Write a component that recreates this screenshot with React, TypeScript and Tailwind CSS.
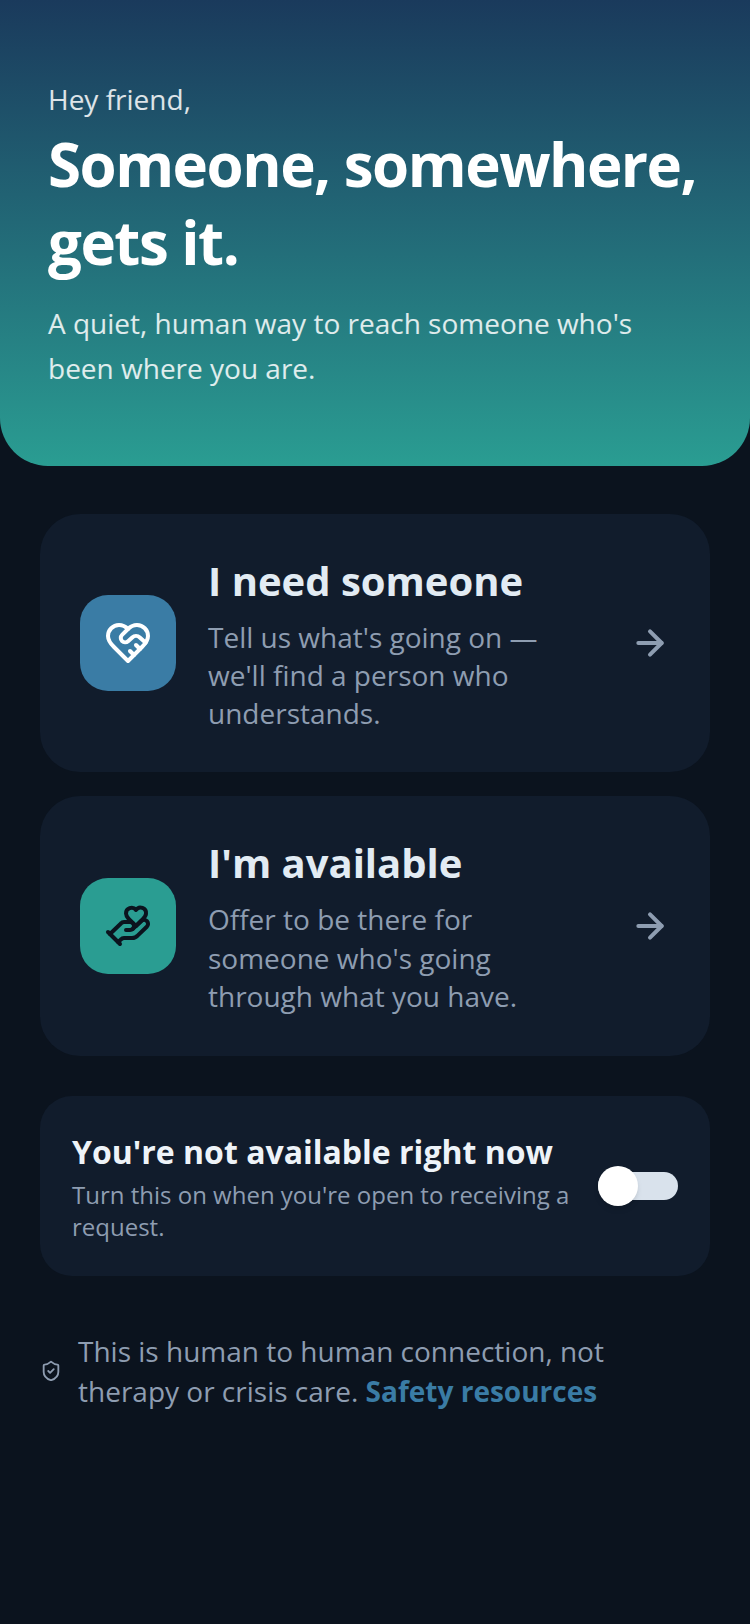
import { ArrowRight, ShieldCheck } from 'lucide-react';
import { ReactNode } from 'react';

function HeartShakeIcon() {
  return (
    <svg width="48" height="48" viewBox="0 0 24 24" fill="none" stroke="currentColor" strokeWidth="2" strokeLinecap="round" strokeLinejoin="round" className="text-white">
      <path d="M19 14c1.49-1.46 3-3.21 3-5.5A5.5 5.5 0 0 0 16.5 3c-1.76 0-3 .5-4.5 2-1.5-1.5-2.74-2-4.5-2A5.5 5.5 0 0 0 2 8.5c0 2.3 1.5 4.05 3 5.5l7 7Z" />
      <path d="M12 5 9.04 7.96a2.17 2.17 0 0 0 0 3.08c.82.82 2.13.85 3 .07l2.07-1.9a2.82 2.82 0 0 1 3.79 0l2.96 2.66" />
      <path d="m18 15-2-2" />
      <path d="m15 18-2-2" />
    </svg>
  );
}

function OpenHandIcon() {
  return (
    <svg width="48" height="48" viewBox="0 0 24 24" fill="none" stroke="currentColor" strokeWidth="2" strokeLinecap="round" strokeLinejoin="round" className="text-[#0b131e]">
      <path d="M11 14h2a2 2 0 1 0 0-4h-3c-.6 0-1.1.2-1.4.6L3 16" />
      <path d="m7 20 1.6-1.4c.3-.4.8-.6 1.4-.6h4c1.1 0 2.1-.4 2.8-1.2l4.6-4.4a2 2 0 0 0-2.75-2.91l-4.2 3.9" />
      <path d="m2 15 6 6" />
      <path d="M19.5 8.5c.7-.7 1.5-1.6 1.5-2.7A2.73 2.73 0 0 0 16 4a2.78 2.78 0 0 0-5 1.8c0 1.2.8 2 1.5 2.8L16 12Z" />
    </svg>
  );
}

function ChoiceCard({ icon, title, text, tone, leading }: { icon: ReactNode; title: string; text: string; tone: string; leading: string }) {
  return (
    <div className="flex items-center rounded-[40px] bg-[#111c2c] py-10 pl-10 pr-10">
      <div className={`flex h-24 w-24 shrink-0 items-center justify-center rounded-[28px] ${tone}`}>{icon}</div>
      <div className="ml-8 min-w-0 flex-1">
        <h2 className="text-[40px] leading-[54px] font-bold text-[#e2ebf3]">{title}</h2>
        <p className={`mt-2.5 max-w-[340px] text-[28px] text-[#8e9db1] ${leading}`}>{text}</p>
      </div>
      <ArrowRight className="ml-4 shrink-0 text-[#8e9db1]" size={40} strokeWidth={2.4} />
    </div>
  );
}

export default function App() {
  return (
    <div className="min-h-[1624px] bg-[#0b131e] font-['Open_Sans',sans-serif]">
      <header className="h-[466px] rounded-b-[48px] bg-gradient-to-b from-[#1a3a5c] to-[#2a9d92] px-12 pt-[77px]">
        <p className="text-[28px] leading-[44px] text-white/85">Hey friend,</p>
        <h1 className="mt-1 text-[60px] leading-[78px] font-bold tracking-[-1.5px] whitespace-nowrap text-white">
          Someone, somewhere,
          <br />
          gets it.
        </h1>
        <p className="mt-5 text-[28px] leading-[45px] text-white/85">
          A quiet, human way to reach someone who's been where you are.
        </p>
      </header>

      <main className="px-10 pt-12">
        <div className="flex flex-col gap-6">
          <ChoiceCard
            icon={<HeartShakeIcon />}
            title="I need someone"
            text="Tell us what's going on — we'll find a person who understands."
            tone="bg-[#3a7ca5]"
            leading="leading-[38px]"
          />
          <ChoiceCard
            icon={<OpenHandIcon />}
            title="I'm available"
            text="Offer to be there for someone who's going through what you have."
            tone="bg-[#2a9d92]"
            leading="leading-[38.67px]"
          />
        </div>

        <section className="mt-10 flex items-center justify-between rounded-[32px] bg-[#111c2c] px-8 py-8">
          <div className="max-w-[500px]">
            <h3 className="text-[32px] leading-[48px] font-bold text-[#eef3f8]">You're not available right now</h3>
            <p className="mt-[3px] mb-px text-[24px] leading-[32px] text-[#8e9db1]">
              Turn this on when you're open to receiving a request.
            </p>
          </div>
          <div className="relative h-7 w-20 shrink-0 rounded-full bg-[#d9e2ec]">
            <span className="absolute -top-1.5 left-0 h-10 w-10 rounded-full bg-white shadow-md" />
          </div>
        </section>

        <footer className="mt-[55px] flex items-center gap-4">
          <ShieldCheck className="shrink-0 text-[#8e9db1]" size={22} strokeWidth={2} />
          <p className="text-[28px] leading-[40px] text-[#8e9db1]">
            This is human to human connection, not therapy or crisis care.{' '}
            <span className="font-bold text-[#3a7ca5]">Safety resources</span>
          </p>
        </footer>
      </main>
    </div>
  );
}
